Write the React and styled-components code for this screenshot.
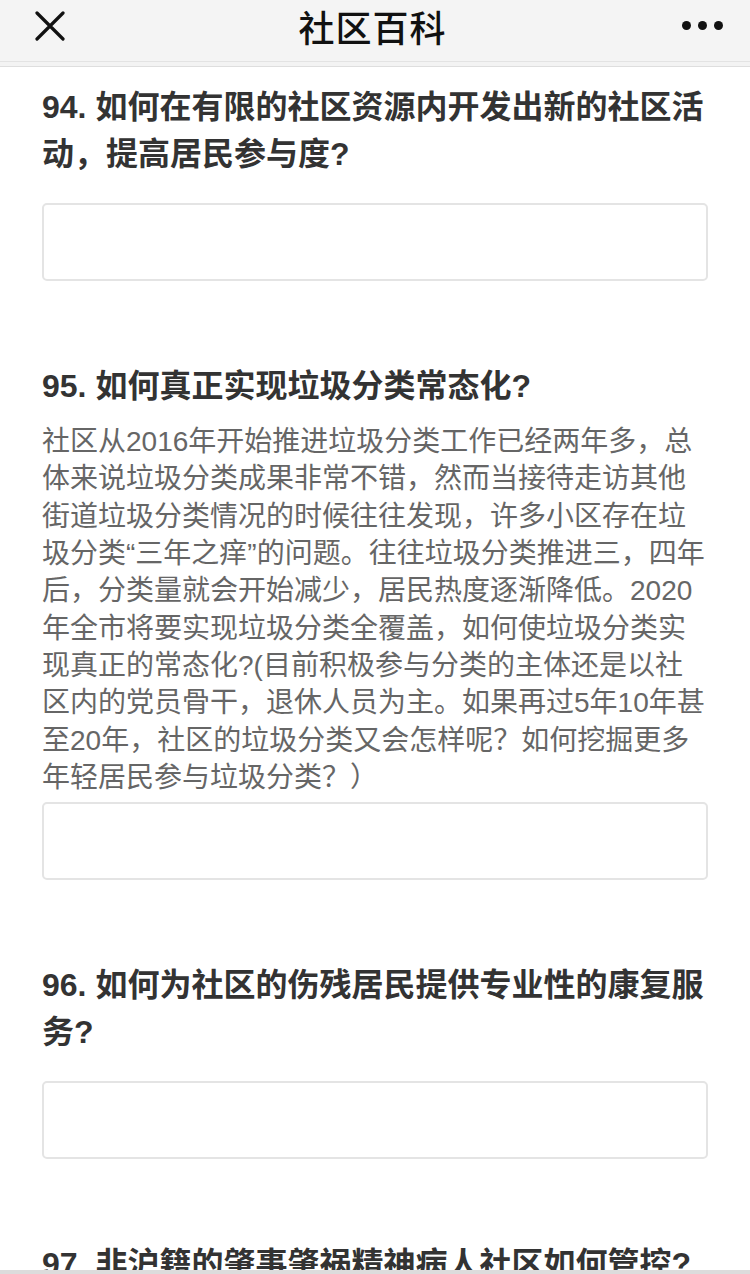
import React from "react";
import styled, { createGlobalStyle } from "styled-components";

const GlobalStyle = createGlobalStyle`
  html, body {
    margin: 0;
    padding: 0;
    background: #ffffff;
    overflow: hidden;
  }
  body {
    font-family: "Liberation Sans", "Noto Sans CJK SC", sans-serif;
  }
`;

// lines are broken where the reference breaks them
const questions = [
  {
    num: 94,
    title: ["94. 如何在有限的社区资源内开发出新的社区活", "动，提高居民参与度?"],
  },
  {
    num: 95,
    title: ["95. 如何真正实现垃圾分类常态化?"],
    desc: [
      "社区从2016年开始推进垃圾分类工作已经两年多，总",
      "体来说垃圾分类成果非常不错，然而当接待走访其他",
      "街道垃圾分类情况的时候往往发现，许多小区存在垃",
      "圾分类“三年之痒”的问题。往往垃圾分类推进三，四年",
      "后，分类量就会开始减少，居民热度逐渐降低。2020",
      "年全市将要实现垃圾分类全覆盖，如何使垃圾分类实",
      "现真正的常态化?(目前积极参与分类的主体还是以社",
      "区内的党员骨干，退休人员为主。如果再过5年10年甚",
      "至20年，社区的垃圾分类又会怎样呢？如何挖掘更多",
      "年轻居民参与垃圾分类？）",
    ],
  },
  {
    num: 96,
    title: ["96. 如何为社区的伤残居民提供专业性的康复服", "务?"],
  },
  {
    num: 97,
    title: ["97. 非沪籍的肇事肇祸精神病人社区如何管控?"],
  },
];

const App = () => {
  return (
    <Page>
      <GlobalStyle />
      <TopBar>
        <IconButton aria-label="关闭">
          <svg width="30" height="30" viewBox="0 0 30 30">
            <path d="M2 2 L28 28 M28 2 L2 28" stroke="#111" strokeWidth="3.2" strokeLinecap="round" />
          </svg>
        </IconButton>
        <BarTitle>社区百科</BarTitle>
        <IconButton aria-label="更多">
          <Dots>
            <Dot />
            <Dot />
            <Dot />
          </Dots>
        </IconButton>
      </TopBar>
      <Content>
        {questions.map((q) => (
          <Question key={q.num}>
            <QTitle>
              {q.title.map((line) => (
                <Line key={line}>{line}</Line>
              ))}
            </QTitle>
            {q.desc && (
              <QDesc>
                {q.desc.map((line) => (
                  <Line key={line}>{line}</Line>
                ))}
              </QDesc>
            )}
            <AnswerBox $afterDesc={!!q.desc} />
          </Question>
        ))}
      </Content>
      <BottomEdge />
    </Page>
  );
};

export default App;

const Page = styled.div`
  width: 750px;
  height: 1274px;
  overflow: hidden;
  position: relative;
  background: #fff;
`;

const TopBar = styled.header`
  height: 61px;
  background: #f4f4f4;
  display: flex;
  align-items: center;
  justify-content: space-between;
  padding: 0 24px 0 35px;
  border-bottom: 1px solid #e3e3e3;
  box-shadow: 0 4px 0 #f3f3f3, 0 5px 0 #dedede;
`;

const IconButton = styled.div`
  width: 44px;
  height: 48px;
  display: flex;
  align-items: center;
  justify-content: flex-start;
  margin-top: -10px;
`;

const BarTitle = styled.h1`
  margin: -10px 16px 0 0;
  font-family: "Noto Sans CJK SC", sans-serif;
  font-size: 36px;
  line-height: 40px;
  font-weight: 500;
  color: #111;
  letter-spacing: 1px;
`;

const Dots = styled.div`
  display: flex;
  gap: 7px;
`;

const Dot = styled.span`
  width: 9px;
  height: 9px;
  border-radius: 50%;
  background: #111;
`;

const Content = styled.main`
  padding: 22px 42px 0;
  display: flex;
  flex-direction: column;
  gap: 82px;
`;

const Question = styled.section`
  display: flex;
  flex-direction: column;
`;

const Line = styled.span`
  display: block;
  white-space: nowrap;
`;

const QTitle = styled.h2`
  margin: 0;
  font-size: 32px;
  line-height: 47px;
  font-weight: 700;
  color: #333;
`;

const QDesc = styled.p`
  margin: 13px 0 0;
  font-size: 28px;
  line-height: 37.33px;
  font-weight: 400;
  color: #666;
`;

const AnswerBox = styled.div`
  margin-top: ${(p) => (p.$afterDesc ? "6px" : "25px")};
  height: 74px;
  border: 2px solid #e4e4e4;
  border-radius: 5px;
  background: #fff;
`;

const BottomEdge = styled.div`
  position: absolute;
  left: 0;
  right: 0;
  bottom: 0;
  height: 4px;
  background: #dcdcdc;
`;
